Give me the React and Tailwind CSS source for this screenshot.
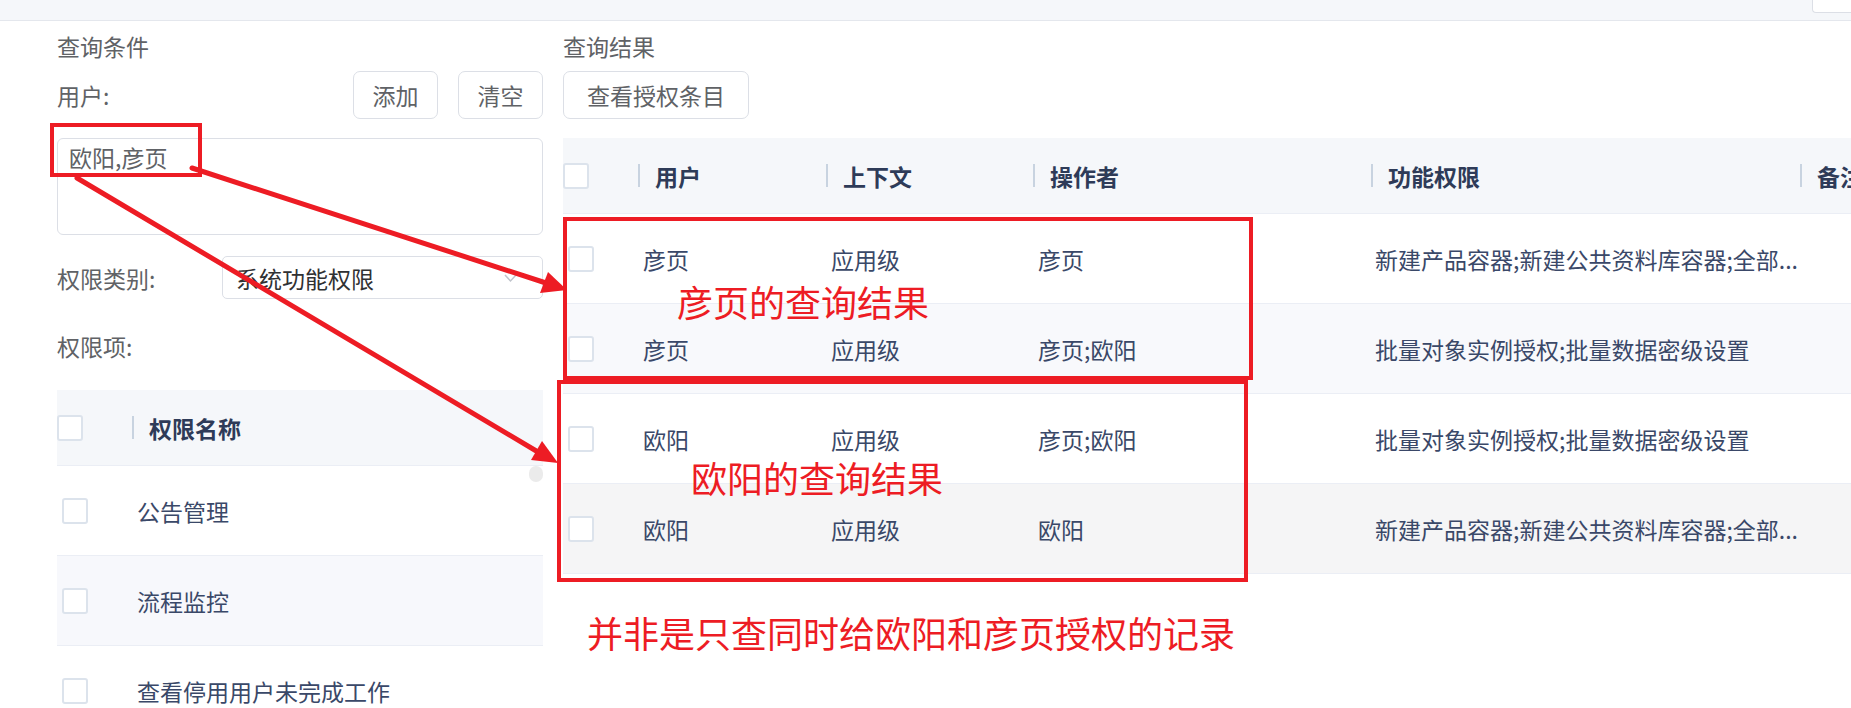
import React from 'react';

const Checkbox = ({ className = '' }) => (
  <span className={`block w-[26px] h-[26px] border-2 border-[#dce3ec] rounded-[3px] bg-white ${className}`} />
);

const HeadCell = ({ label, width }) => (
  <div className={`flex items-center h-full ${width}`}>
    <span className="w-[2px] h-[23px] bg-[#c8d3e0]" />
    <span className="ml-[15px] font-bold text-[#2e3b58]">{label}</span>
  </div>
);

const rows = [
  { user: '彦页', ctx: '应用级', op: '彦页', fn: '新建产品容器;新建公共资料库容器;全部...', bg: 'bg-white' },
  { user: '彦页', ctx: '应用级', op: '彦页;欧阳', fn: '批量对象实例授权;批量数据密级设置', bg: 'bg-[#f8f9fc]' },
  { user: '欧阳', ctx: '应用级', op: '彦页;欧阳', fn: '批量对象实例授权;批量数据密级设置', bg: 'bg-white' },
  { user: '欧阳', ctx: '应用级', op: '欧阳', fn: '新建产品容器;新建公共资料库容器;全部...', bg: 'bg-[#f5f5f6]' },
];

const perms = [
  { name: '公告管理', bg: 'bg-white' },
  { name: '流程监控', bg: 'bg-[#f7f8fc]' },
  { name: '查看停用用户未完成工作', bg: 'bg-white' },
];

const App = () => {
  return (
    <div className="relative w-[1851px] h-[708px] overflow-hidden bg-white text-[23px] leading-[30px] font-['Noto_Sans_CJK_SC','Microsoft_YaHei',sans-serif]">
      {/* top strip */}
      <div className="relative h-[21px] bg-[#f5f7fa] border-b border-[#e4e7ed]">
        <div className="absolute right-0 top-0 w-[39px] h-[13px] bg-white border-l border-b border-[#dcdfe6] rounded-bl-[4px]" />
      </div>

      <div className="flex pl-[57px] pt-[10px]">
        {/* 查询条件 */}
        <div className="w-[486px] shrink-0 flex flex-col">
          <div className="text-[#606266]">查询条件</div>
          <div className="flex items-center mt-[10px]">
            <span className="flex-1 text-[#606266]">用户:</span>
            <button className="w-[85px] h-[48px] border border-[#dcdfe6] rounded-[7px] bg-white text-[#606266]">添加</button>
            <button className="w-[85px] h-[48px] ml-[20px] border border-[#dcdfe6] rounded-[7px] bg-white text-[#606266]">清空</button>
          </div>
          <div className="mt-[19px] h-[97px] border border-[#dcdfe6] rounded-[6px] pl-[11px] pt-[3px] text-[#606266]">
            欧阳,彦页
          </div>
          <div className="flex items-center mt-[21px]">
            <span className="w-[165px] text-[#606266]">权限类别:</span>
            <div className="relative flex items-center w-[321px] h-[43px] border border-[#dcdfe6] rounded-[5px] pl-[13px] text-[#303133]">
              系统功能权限
              <svg className="absolute right-[25px] top-[15px]" width="13" height="12" viewBox="0 0 13 12">
                <path d="M1 3 L6.5 9 L12 3" fill="none" stroke="#c0c4cc" strokeWidth="1.5" />
              </svg>
            </div>
          </div>
          <div className="mt-[32px] text-[#606266]">权限项:</div>

          <div className="relative mt-[29px]">
            <div className="flex items-center h-[76px] bg-[#f5f7fa] border-b border-[#ebeef5]">
              <div className="w-[75px]">
                <Checkbox />
              </div>
              <HeadCell label="权限名称" width="flex-1" />
            </div>
            {perms.map((p) => (
              <div key={p.name} className={`flex items-center h-[90px] border-b border-[#ebeef5] ${p.bg}`}>
                <div className="w-[75px] pl-[5px]">
                  <Checkbox />
                </div>
                <span className="pl-[5px] text-[#3a4868]">{p.name}</span>
              </div>
            ))}
            <div className="absolute right-0 top-[76px] w-[14px] h-[16px] rounded-full bg-[#ebebeb]" />
          </div>
        </div>

        {/* 查询结果 */}
        <div className="ml-[20px] flex flex-col">
          <div className="text-[#606266]">查询结果</div>
          <div className="mt-[10px]">
            <button className="w-[186px] h-[48px] border border-[#dcdfe6] rounded-[7px] bg-white text-[#606266]">查看授权条目</button>
          </div>
          <div className="mt-[19px] w-[1600px]">
            <div className="flex items-center h-[76px] bg-[#f5f7fa] border-b border-[#ebeef5]">
              <div className="w-[75px]">
                <Checkbox />
              </div>
              <HeadCell label="用户" width="w-[188px]" />
              <HeadCell label="上下文" width="w-[207px]" />
              <HeadCell label="操作者" width="w-[338px]" />
              <HeadCell label="功能权限" width="w-[429px]" />
              <HeadCell label="备注" width="w-[300px]" />
            </div>
            {rows.map((r, i) => (
              <div key={i} className={`flex items-center h-[90px] border-b border-[#ebeef5] text-[#3a4868] ${r.bg}`}>
                <div className="w-[75px] pl-[5px]">
                  <Checkbox />
                </div>
                <div className="w-[188px] pl-[5px]">{r.user}</div>
                <div className="w-[207px] pl-[5px]">{r.ctx}</div>
                <div className="w-[338px] pl-[5px]">{r.op}</div>
                <div className="w-[429px] pl-[4px] whitespace-nowrap">{r.fn}</div>
                <div className="w-[300px]" />
              </div>
            ))}
          </div>
        </div>
      </div>

      {/* red annotations */}
      <svg className="absolute inset-0 pointer-events-none" width="1851" height="708" viewBox="0 0 1851 708">
        <g fill="none" stroke="#ed1c24" strokeWidth="4">
          <rect x="52" y="125" width="148" height="50" />
          <rect x="565" y="219" width="686" height="159" />
          <rect x="559" y="382" width="687" height="198" />
        </g>
        <g stroke="#ed1c24" strokeWidth="5" strokeLinecap="round">
          <line x1="192" y1="168" x2="546" y2="283" />
          <line x1="77" y1="178" x2="538" y2="452" />
        </g>
        <g fill="#ed1c24">
          <polygon points="567,290 540,293 548,272" />
          <polygon points="558,463 531,460 542,441" />
        </g>
      </svg>
      <div className="absolute left-[677px] top-[283px] text-[36px] leading-[36px] text-[#ed1c24]">彦页的查询结果</div>
      <div className="absolute left-[691px] top-[459px] text-[36px] leading-[36px] text-[#ed1c24]">欧阳的查询结果</div>
      <div className="absolute left-[587px] top-[614px] text-[36px] leading-[36px] text-[#ed1c24]">并非是只查同时给欧阳和彦页授权的记录</div>
    </div>
  );
};

export default App;
